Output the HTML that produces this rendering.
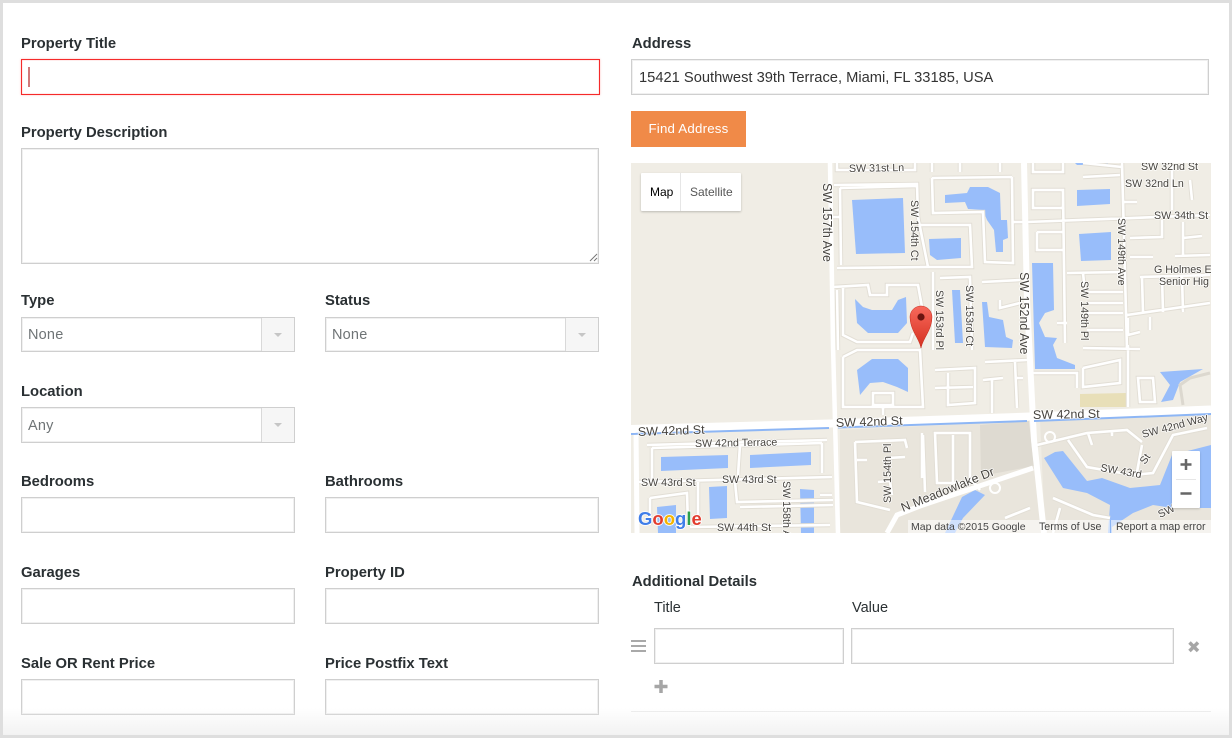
<!DOCTYPE html>
<html><head><meta charset="utf-8">
<style>
html,body{margin:0;padding:0;background:#fff}
body{width:1232px;height:738px;position:relative;overflow:hidden;font-family:"Liberation Sans",sans-serif;color:#2a3033}
.frame{position:absolute;inset:0;border:solid #dedede;border-width:3px 3px 3px 3px;box-sizing:border-box;z-index:5;pointer-events:none}
.fade{position:absolute;left:0;right:0;top:708px;height:30px;background:linear-gradient(#fff0,#f1f1f1);z-index:4}
.l{position:absolute;font-weight:bold;font-size:14.8px;line-height:18px;white-space:nowrap}
.i{position:absolute;box-sizing:border-box;background:#fff;border:1px solid #cfcfcf;box-shadow:inset 0 0 0 1px #f0f0f0}
.s{color:#6f7476;font-size:14.5px;line-height:35px;padding-left:6px;letter-spacing:.2px}
.a{position:absolute;right:0;top:0;bottom:0;width:32px;background:#f6f6f6;border-left:1px solid #d9d9d9}
.a:after{content:"";position:absolute;left:12px;top:15px;border:4px solid transparent;border-top:4px solid #c6c6c6;border-bottom:0}
svg{position:absolute;left:0;top:0}
#roads path{fill:none}
.t text{font-family:"Liberation Sans",sans-serif;font-size:10.7px;fill:#46433e;stroke:#fff;stroke-width:1.6px;stroke-opacity:.85;paint-order:stroke;stroke-linejoin:round}
.t text.m{font-size:12.5px}
</style></head><body>
<div class="l" style="left:21px;top:35px">Property Title</div>
<div class="i" style="left:21px;top:59px;width:579px;height:36px;border:1px solid #f52a2a;box-shadow:0 0 2px #fbb,inset 0 0 1px #f88"><div style="position:absolute;left:6px;top:7px;width:2px;height:20px;background:#d07a7a"></div></div>
<div class="l" style="left:21px;top:124px">Property Description</div>
<div class="i" style="left:21px;top:148px;width:578px;height:116px"><svg width="10" height="10" style="left:567px;top:104px"><path d="M1 8L8 1M5 8L8 5" stroke="#777" stroke-width="1"/></svg></div>
<div class="l" style="left:21px;top:292px">Type</div>
<div class="i s" style="left:21px;top:317px;width:274px;height:35px">None<div class="a"></div></div>
<div class="l" style="left:325px;top:292px">Status</div>
<div class="i s" style="left:325px;top:317px;width:274px;height:35px">None<div class="a"></div></div>
<div class="l" style="left:21px;top:383px">Location</div>
<div class="i s" style="left:21px;top:407px;width:274px;height:36px;line-height:36px">Any<div class="a"></div></div>
<div class="l" style="left:21px;top:473px">Bedrooms</div>
<div class="i" style="left:21px;top:497px;width:274px;height:36px"></div>
<div class="l" style="left:325px;top:473px">Bathrooms</div>
<div class="i" style="left:325px;top:497px;width:274px;height:36px"></div>
<div class="l" style="left:21px;top:564px">Garages</div>
<div class="i" style="left:21px;top:588px;width:274px;height:36px"></div>
<div class="l" style="left:325px;top:564px">Property ID</div>
<div class="i" style="left:325px;top:588px;width:274px;height:36px"></div>
<div class="l" style="left:21px;top:655px">Sale OR Rent Price</div>
<div class="i" style="left:21px;top:679px;width:274px;height:36px"></div>
<div class="l" style="left:325px;top:655px">Price Postfix Text</div>
<div class="i" style="left:325px;top:679px;width:274px;height:36px"></div>

<div class="l" style="left:632px;top:35px">Address</div>
<div class="i" style="left:631px;top:59px;width:578px;height:36px;font-size:14.7px;line-height:36px;padding-left:7px;color:#333">15421 Southwest 39th Terrace, Miami, FL 33185, USA</div>
<div style="position:absolute;left:631px;top:111px;width:115px;height:36px;background:#f08a48;color:#fff;font-size:13.3px;line-height:36px;text-align:center;letter-spacing:.2px">Find Address</div>

<svg width="1232" height="738" viewBox="0 0 1232 738">
<defs>
<clipPath id="c"><rect x="631" y="163" width="580" height="370"/></clipPath>
<linearGradient id="pg" x1="0" y1="0" x2="0" y2="1"><stop offset="0" stop-color="#f8695c"/><stop offset="1" stop-color="#d4301f"/></linearGradient>
<g id="roads">
<path d="M837 163V170H915V163M834 185L917 184 918 217 928 267 837 268M840 188L841 265M840 188L916 186M830 217H840M833 287L868 285 870 295H887L887 285H918L922 307M843 288V335L857 342H910L913 333M837 290L838 350M843 357V407H923L920 350H857L843 357M873 393H893V405H873ZM883 408V415M647 445L827 440M652 448L822 443M652 448V482M822 443V473M740 445L738 475M637 482L832 477M698 482V525M735 482L737 502 833 500M740 507L833 505M650 498L687 493 688 525M650 525V498M690 527L830 525M820 495H832M855 442L905 440 907 448M855 442L857 502 890 510M857 460H867M888 458L905 457M878 482L890 481 892 495M923 435L925 492M935 433H970V483H937ZM953 435V482M922 433V478M970 478L980 490M1005 518L1030 508M1053 498L1093 515 1110 518M1060 508L1053 533M1037 445L1087 433 1127 430 1142 442M1068 440L1087 467 1133 475 1153 473 1173 435 1207 428M1088 433L1092 445M1142 445L1137 472M1112 430V436M935 370L975 368V403L948 405V373M935 388L973 387M983 380L1003 378M992 380V413M985 362L1027 360M1015 362L1017 408M1017 378H1023M1033 373H1077V388M1083 368V387L1120 383V360L1083 368M1128 345V407M1083 348L1140 349M1138 378H1153L1155 402H1140ZM932 178L1012 177M932 178L933 213 983 212 985 262 1013 263 1012 177M1027 222L1210 215M920 225H970L972 267 920 267M933 272V350M940 278L970 277 972 350M982 282L1020 280M1000 300V308L1020 303M1063 190L1065 343M1033 190H1063V208H1033ZM1037 232H1063M1037 232V250H1063M1067 273L1123 272M1122 163L1127 350M1083 177L1120 175M1123 202H1137M1130 238L1162 237V220M1130 257H1153M1183 222V255M1183 238L1202 236M1175 256L1210 255M1140 277L1210 275M1142 277L1143 313M1162 277L1163 312M1182 277L1183 312M1127 315L1210 303M1087 292H1123M1087 303H1123M1087 313H1123M1087 330H1123M1083 273L1085 292M1150 317V330M1128 318V335L1140 332M1057 323H1067M1190 180L1192 200M1172 165V210M1012 222H1027M932 163V172M960 163V172M1000 163V172M1033 163V172H1063V163M1083 163L1122 167"/>
</g>
</defs>
<g clip-path="url(#c)">
<rect x="631" y="163" width="580" height="370" fill="#f0ede5"/>
<path d="M840 430L1027 421 1045 533H840ZM1040 420L1211 411V533H1045Z" fill="#e9e5dc"/>
<path d="M980 425L1029 421 1034 466 981 476Z" fill="#dedad1"/>
<path d="M1080 394L1126 393V407H1080Z" fill="#e8dfb8"/>
<g fill="#98bdfa">
<path d="M852 200L903 198 905 253 856 254Z"/>
<path d="M855 299L863 307 872 310H892L898 300 906 297 907 323 898 333H868L857 323Z"/>
<path d="M857 370L872 359H898L908 368V392L897 387 883 382 870 383 860 395Z"/>
<path d="M661 457L728 455V468L661 471Z"/>
<path d="M750 455L811 452V465L750 468Z"/>
<path d="M709 487L727 486V518L710 519Z"/>
<path d="M800 489L814 490V533H801Z"/>
<path d="M657 507L676 505V533H658Z"/>
<path d="M945 195L967 193 970 187H988L1000 193 1001 220H1007L1008 238 1003 240V252H996L994 230 987 220 983 210 968 209 965 202 945 203Z"/>
<path d="M929 239L961 238V258L937 260 930 255Z"/>
<path d="M1077 190L1110 189V204L1077 206Z"/>
<path d="M1075 163H1108L1107 165 1077 165Z"/>
<path d="M1079 234L1111 232V260L1081 261Z"/>
<path d="M1032 263L1053 263 1054 310 1045 313 1039 323 1045 337 1057 338 1053 345 1057 358 1075 365V369H1035Z"/>
<path d="M952 290H960L963 343 955 343Z"/>
<path d="M982 302H987L989 317 1003 320 1006 337 1013 340 1012 348 985 347Z"/>
<path d="M1160 372L1203 369 1180 382 1173 400 1161 402 1170 385Z"/>
<path d="M1044 458L1055 452 1063 451 1087 481 1102 478 1130 488 1160 485 1172 455 1211 445V508L1173 508 1153 505 1133 513 1112 527V533H1108L1110 505 1087 493 1063 488Z"/>
<path d="M985 495L963 518 955 533H945L962 497 975 490Z"/>
</g>
<use href="#roads" stroke="#e2ded5" stroke-width="4.5"/>
<use href="#roads" stroke="#fff" stroke-width="2.6"/>
<g fill="none" stroke="#fff">
<path d="M1024 163L1027 300 1030 360 1034 440 1044 533" stroke-width="6"/>
<path d="M830 163L833 345 838 533" stroke-width="4.5"/>
<path d="M636 430L637 533" stroke-width="5"/>
<path d="M631 429L830 423.500 1030 416.500 1211 409.500" stroke-width="8"/>
<path d="M887 533L897 515 920 506 1033 468" stroke-width="5"/>
<circle cx="995" cy="488" r="5" stroke-width="2"/>
<circle cx="1050" cy="437" r="5" stroke-width="2"/>
</g>
<path d="M631 434L829 428M838 427.500L1027 421M1034 421L1211 414" stroke="#8db6f5" stroke-width="2" fill="none"/>
<path d="M1183 405L1180 385 1190 378 1210 373" stroke="#dcd8cf" stroke-width="3" fill="none"/>
<g class="t">
<text x="849" y="172" transform="rotate(-1 849 172)">SW 31st Ln</text>
<text x="1141" y="170">SW 32nd St</text>
<text x="1125" y="187">SW 32nd Ln</text>
<text x="1154" y="219">SW 34th St</text>
<text x="1154" y="273">G Holmes E</text>
<text x="1159" y="285">Senior Hig</text>
<text class="m" transform="translate(823 183) rotate(90)">SW 157th Ave</text>
<text transform="translate(911 200) rotate(90)">SW 154th Ct</text>
<text transform="translate(936 290) rotate(90)">SW 153rd Pl</text>
<text transform="translate(966 285) rotate(90)">SW 153rd Ct</text>
<text class="m" transform="translate(1020 272) rotate(90)">SW 152nd Ave</text>
<text transform="translate(1081 281) rotate(90)">SW 149th Pl</text>
<text transform="translate(1118 218) rotate(90)">SW 149th Ave</text>
<text class="m" transform="translate(638 436) rotate(-2)">SW 42nd St</text>
<text class="m" transform="translate(836 427) rotate(-2)">SW 42nd St</text>
<text class="m" transform="translate(1033 419) rotate(-1)">SW 42nd St</text>
<text transform="translate(695 447) rotate(-1)">SW 42nd Terrace</text>
<text x="641" y="486">SW 43rd St</text>
<text x="722" y="483">SW 43rd St</text>
<text x="717" y="531">SW 44th St</text>
<text transform="translate(783 481) rotate(90)">SW 158th A</text>
<text transform="translate(891 503) rotate(-90)">SW 154th Pl</text>
<text class="m" transform="translate(903 512) rotate(-22)">N Meadowlake Dr</text>
<text transform="translate(1100 471) rotate(10)">SW 43rd</text>
<text transform="translate(1145 465) rotate(-55)">St</text>
<text transform="translate(1143 438) rotate(-15)">SW 42nd Way</text>
<text transform="translate(1160 518) rotate(-25)">SW</text>
</g>
<path d="M921 348C919 338 910 330 910 317A11 11 0 0 1 932 317C932 330 923 338 921 348Z" fill="url(#pg)" stroke="#c4281a" stroke-width=".5"/>
<circle cx="921" cy="317" r="3.600" fill="#6b1410"/>
<rect x="908" y="520" width="303" height="13" fill="#fff" fill-opacity=".55"/>
<text x="911" y="530" font-family="Liberation Sans" font-size="10.500" fill="#444">Map data ©2015 Google</text>
<text x="1039" y="530" font-family="Liberation Sans" font-size="10.600" fill="#444">Terms of Use</text>
<text x="1116" y="530" font-family="Liberation Sans" font-size="10.600" fill="#444">Report a map error</text>
<rect x="1110" y="520" width="1" height="13" fill="#8db6f5"/>
<text x="638" y="525" font-family="Liberation Sans" font-weight="bold" font-size="18.500" stroke="#fff" stroke-width="1.500" paint-order="stroke"><tspan fill="#3f7de8">G</tspan><tspan fill="#e23c2e">o</tspan><tspan fill="#f4b400">o</tspan><tspan fill="#3f7de8">g</tspan><tspan fill="#2c9f4d">l</tspan><tspan fill="#e23c2e">e</tspan></text>
</g>
<rect x="641" y="173" width="100" height="38" fill="#fff" rx="1" style="filter:drop-shadow(0 1px 1px rgba(0,0,0,.22))"/>
<rect x="680" y="173" width="1" height="38" fill="#e6e6e6"/>
<text x="650" y="196" font-family="Liberation Sans" font-size="12" fill="#000">Map</text>
<text x="690" y="196" font-family="Liberation Sans" font-size="12" fill="#565656">Satellite</text>
<rect x="1172" y="451" width="28" height="57" fill="#fff" rx="1" style="filter:drop-shadow(0 1px 1px rgba(0,0,0,.18))"/>
<rect x="1176" y="479" width="20" height="1" fill="#e6e6e6"/>
<path d="M1186 459V470M1180.500 464.500H1191.500" stroke="#666" stroke-width="2.500" fill="none"/>
<path d="M1180.500 493.500H1191.500" stroke="#666" stroke-width="2.500" fill="none"/>
</svg>

<div class="l" style="left:632px;top:573px">Additional Details</div>
<div style="position:absolute;left:654px;top:599px;font-size:14.500px;line-height:18px">Title</div>
<div style="position:absolute;left:852px;top:599px;font-size:14.500px;line-height:18px">Value</div>
<div class="i" style="left:654px;top:628px;width:190px;height:36px"></div>
<div class="i" style="left:851px;top:628px;width:323px;height:36px"></div>
<svg width="1232" height="738" viewBox="0 0 1232 738" style="z-index:2">
<path d="M631 641H646M631 646H646M631 651H646" stroke="#a9a9a9" stroke-width="2" fill="none"/>
<path d="M1189.500 642.500L1198 651M1198 642.500L1189.500 651" stroke="#a6a6a6" stroke-width="3.500" fill="none"/>
<path d="M661 680V693M654.500 686.500H667.500" stroke="#a6a6a6" stroke-width="3.500" fill="none"/>
<rect x="631" y="711" width="580" height="1" fill="#ececec"/>
</svg>
<div class="fade"></div>
<div class="frame"></div>
</body></html>
